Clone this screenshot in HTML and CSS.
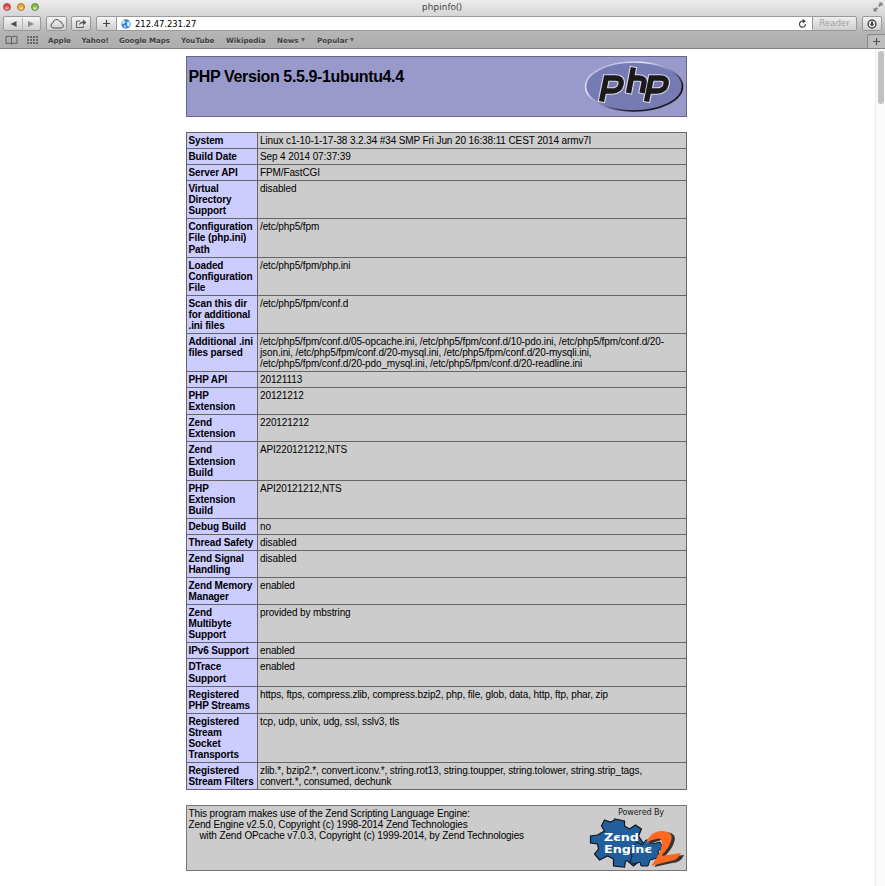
FILE: index.html
```
<!DOCTYPE html>
<html lang="en">
<head>
<meta charset="utf-8">
<title>phpinfo()</title>
<link rel="stylesheet" href="styles.css">
</head>
<body>
<header class="chrome">
  <div class="titlebar">
    <div class="lights"><i class="red"></i><i class="amber"></i><i class="green"></i></div>
    <span class="title">phpinfo()</span>
    <svg class="full" width="10" height="10" viewBox="0 0 10 10"><path d="M5.500.5h4v4L8.300 3.300 6.500 5 5 3.500 6.700 1.700zM4.500 9.500h-4v-4l1.200 1.200L3.500 5 5 6.500 3.300 8.300z" fill="#828282"/></svg>
  </div>
  <div class="toolbar">
    <div class="btn nav"><svg width="36" height="14" viewBox="0 0 36 14"><path d="M12.500 4v6L6.500 7z" fill="#505050"/><path d="M24 4v6L30 7z" fill="#8c8c8c"/><path d="M18.500 1v12" stroke="#b5b5b5"/></svg></div>
    <div class="btn cloud"><svg width="16" height="12" viewBox="0 0 16 12"><path d="M4 10h8.200a2.300 2.300 0 0 0 .5-4.500 2.200 2.200 0 0 0-2-2.200A3.600 3.600 0 0 0 4 4.800 2.700 2.700 0 0 0 4 10z" fill="none" stroke="#505050"/></svg></div>
    <div class="btn share"><svg width="14" height="12" viewBox="0 0 14 12"><path d="M6 3H2.500v6.500h7V8" fill="none" stroke="#606060"/><path d="M5 7.500C5.200 4.800 6.500 3.500 9 3.500V1.500L12.500 4.500 9 7.300V5.300C7 5.200 6 6 5 7.500z" fill="#555"/></svg></div>
    <div class="btn plus"><svg width="9" height="9" viewBox="0 0 9 9"><path d="M4.500 1v7M1 4.500h7" stroke="#444" stroke-width="1.200"/></svg></div>
    <div class="address">
      <svg width="10" height="10" viewBox="0 0 10 10"><circle cx="5" cy="5" r="4.700" fill="#3c83ce"/><path d="M2 1.500Q4 1 4.500 2.500L3.500 4.500 1 5Q.8 3 2 1.500zM6 3l2.500-.8Q9.500 4 9 6L7.500 8 6 6.500zM3 6l2 1-.7 2Q2.700 8.500 3 6z" fill="#c9e7ff"/></svg>
      <span>212.47.231.27</span>
      <svg class="reload" width="9" height="10" viewBox="0 0 9 10"><path d="M7.500 5.200A3 3 0 1 1 5 2.200" fill="none" stroke="#444" stroke-width="1.200"/><path d="M4.500 0 8 2 5 4.500z" fill="#444"/></svg>
    </div>
    <div class="reader">Reader</div>
    <div class="btn down"><svg width="10" height="10" viewBox="0 0 10 10"><circle cx="5" cy="5" r="3.900" fill="#eee" stroke="#505050" stroke-width="1.500"/><path d="M4 2.500h2v2.200h1.500L5 7.500 2.500 4.700H4z" fill="#444"/></svg></div>
  </div>
  <div class="bookmarks">
    <svg class="book" width="13" height="10" viewBox="0 0 13 10"><path d="M6.500 2Q4 .500 1 1.500V8.500Q4 7.500 6.500 9 9 7.500 12 8.500V1.500Q9 .500 6.500 2zV9" fill="none" stroke="#555" stroke-width=".9"/></svg>
    <svg class="dots" width="11" height="9" viewBox="0 0 11 9"><path d="M0 1h11M0 4h11M0 7h11" stroke="#505050" stroke-width="1.500" stroke-dasharray="2 1"/></svg>
    <span class="bm apple">Apple</span><span class="bm yahoo">Yahoo!</span><span class="bm maps">Google Maps</span><span class="bm tube">YouTube</span><span class="bm wiki">Wikipedia</span><span class="bm news">News</span><i class="tri"></i><span class="bm pop">Popular</span><i class="tri"></i>
    <div class="newtab"><svg width="7" height="7" viewBox="0 0 7 7"><path d="M3.500 0v7M0 3.500h7" stroke="#555" stroke-width="1.200"/></svg></div>
  </div>
</header>
<div class="view">
<main class="page">
  <section class="banner">
    <h1>PHP Version 5.5.9-1ubuntu4.4</h1>
    <svg width="102" height="54" viewBox="0 0 102 54">
      <defs><linearGradient id="rim" x1="0" y1="0" x2="1" y2="1"><stop offset="0" stop-color="#9a9acc"/><stop offset=".3" stop-color="#e4e4f4"/><stop offset=".55" stop-color="#7377ad"/><stop offset=".75" stop-color="#111"/><stop offset="1" stop-color="#333"/></linearGradient></defs>
      <ellipse cx="50" cy="26.500" rx="48.500" ry="24.500" fill="#777bb4" stroke="url(#rim)" stroke-width="1.600"/>
      <g fill="none">
        <g stroke="#d8d8ec" stroke-width="7.600">
          <path d="M17.300 42.500 22.300 18H31Q38.500 18 37 24.500 35.500 31 28 31H21.500"/>
          <path d="M44.300 34 49.600 6.500M47.500 18H54.500Q61 18 60 23L57.800 34"/>
          <path d="M62.300 42.500 67.300 18H76Q83.500 18 82 24.500 80.500 31 73 31H66.500"/>
        </g>
        <g stroke="#1b1919" stroke-width="5.300">
          <path d="M17.500 41.500 22.300 18H31Q38.500 18 37 24.500 35.500 31 28 31H21.500"/>
          <path d="M44.500 33 49.400 7.500M47.500 18H54.500Q61 18 60 23L58 33"/>
          <path d="M62.500 41.500 67.300 18H76Q83.500 18 82 24.500 80.500 31 73 31H66.500"/>
        </g>
      </g>
    </svg>
  </section>
  <dl class="info">
    <dt>System</dt><dd>Linux c1-10-1-17-38 3.2.34 #34 SMP Fri Jun 20 16:38:11 CEST 2014 armv7l</dd>
    <dt>Build Date</dt><dd>Sep 4 2014 07:37:39</dd>
    <dt>Server API</dt><dd>FPM/FastCGI</dd>
    <dt>Virtual<br>Directory<br>Support</dt><dd>disabled</dd>
    <dt>Configuration<br>File (php.ini)<br>Path</dt><dd>/etc/php5/fpm</dd>
    <dt>Loaded<br>Configuration<br>File</dt><dd>/etc/php5/fpm/php.ini</dd>
    <dt>Scan this dir<br>for additional<br>.ini files</dt><dd>/etc/php5/fpm/conf.d</dd>
    <dt>Additional .ini<br>files parsed</dt><dd>/etc/php5/fpm/conf.d/05-opcache.ini, /etc/php5/fpm/conf.d/10-pdo.ini, /etc/php5/fpm/conf.d/20-<br>json.ini, /etc/php5/fpm/conf.d/20-mysql.ini, /etc/php5/fpm/conf.d/20-mysqli.ini,<br>/etc/php5/fpm/conf.d/20-pdo_mysql.ini, /etc/php5/fpm/conf.d/20-readline.ini</dd>
    <dt>PHP API</dt><dd>20121113</dd>
    <dt>PHP<br>Extension</dt><dd>20121212</dd>
    <dt>Zend<br>Extension</dt><dd>220121212</dd>
    <dt>Zend<br>Extension<br>Build</dt><dd>API220121212,NTS</dd>
    <dt>PHP<br>Extension<br>Build</dt><dd>API20121212,NTS</dd>
    <dt>Debug Build</dt><dd>no</dd>
    <dt>Thread Safety</dt><dd>disabled</dd>
    <dt>Zend Signal<br>Handling</dt><dd>disabled</dd>
    <dt>Zend Memory<br>Manager</dt><dd>enabled</dd>
    <dt>Zend<br>Multibyte<br>Support</dt><dd>provided by mbstring</dd>
    <dt>IPv6 Support</dt><dd>enabled</dd>
    <dt>DTrace<br>Support</dt><dd>enabled</dd>
    <dt>Registered<br>PHP Streams</dt><dd>https, ftps, compress.zlib, compress.bzip2, php, file, glob, data, http, ftp, phar, zip</dd>
    <dt>Registered<br>Stream<br>Socket<br>Transports</dt><dd>tcp, udp, unix, udg, ssl, sslv3, tls</dd>
    <dt>Registered<br>Stream Filters</dt><dd>zlib.*, bzip2.*, convert.iconv.*, string.rot13, string.toupper, string.tolower, string.strip_tags,<br>convert.*, consumed, dechunk</dd>
  </dl>
  <section class="zend">
    <p>This program makes use of the Zend Scripting Language Engine:<br>Zend Engine v2.5.0, Copyright (c) 1998-2014 Zend Technologies<br><span class="indent">with Zend OPcache v7.0.3, Copyright (c) 1999-2014, by Zend Technologies</span></p>
    <svg width="100" height="64" viewBox="0 0 100 64">
      <text class="powered" x="32" y="9" textLength="46" lengthAdjust="spacingAndGlyphs">Powered By</text>
      <path transform="translate(1.500 -5)" d="M17 19 23 21 27 19 27 18 37 20V25L42 28 48 24 54 28 51 35 55 41 60 44V51L53 51 49 55 52 60 46 65 40 60 38 60 37 66 26 65 26 58 20 55 12 59 7 53 11 48 10 43 3 42V35L10 34 17 30 14 25Z" fill="#215f9c" stroke="#10151c" stroke-width="1.200"/>
      <path transform="translate(-5 1)" d="M53 38 56 35 61 38 65 33H70L72 37 79 35 82 41 77 44 78 50 73 52 69 53 67 59H60L59 55 53 57 49 54 51 49 49 45Z" fill="#215f9c" stroke="#10151c"/>
      <path d="M61 38Q66 24 79 25 90 26 87 35 85 42 77 50L97 48Q93 56 85 56L67 60Q78 46 78 37 78 31 71 34 65 36 61 38Z" transform="translate(1.200 1)" fill="#39332f"/>
      <path d="M60 37Q65 24 77 25 88 26 85 35 83 42 75 50L95 47Q92 54 84 55L65 60Q76 46 76 37 76 31 70 33 64 34 60 37Z" fill="#ff6820"/>
      <g class="engine"><text x="18" y="34.500" textLength="35" lengthAdjust="spacingAndGlyphs">Zєnd</text><text x="18" y="47" textLength="48" lengthAdjust="spacingAndGlyphs">Enginє</text></g>
    </svg>
  </section>
</main>
<div class="scroll"><i></i></div>
</div>
</body>
</html>
```
FILE: styles.css
```
* { box-sizing: border-box; }
body { margin: 0; width: 885px; height: 886px; overflow: hidden; background: #fff; color: #000; font-family: "Liberation Sans", Arial, sans-serif; }
svg { display: block; flex: none; }
i { display: block; flex: none; }
.chrome { height: 49px; background: linear-gradient(#ececec, #d5d5d5 16px, #b5b5b5 32px, #adadad 48px); border-bottom: 1px solid #828282; font-family: "Open Sans", sans-serif; }
.titlebar { height: 15px; display: grid; grid-template-columns: 100px 1fr 100px; align-items: center; padding: 0 2px 2px 3px; }
.lights { display: flex; gap: 6px; }
.lights i { width: 8px; height: 8px; border-radius: 50%; border: 1px solid; }
.red { background: radial-gradient(circle at 50% 80%, #ffb5a8, #e8443d 60%); border-color: #a84642 !important; }
.amber { background: radial-gradient(circle at 50% 80%, #ffe69a, #efa02d 60%); border-color: #a97833 !important; }
.green { background: radial-gradient(circle at 50% 80%, #d9f5aa, #7db845 60%); border-color: #628c42 !important; }
.title { text-align: center; font-size: 9px; line-height: 13px; color: #333; letter-spacing: .2px; padding-right: 2px; }
.full { justify-self: end; }
.toolbar { height: 17px; display: flex; align-items: flex-start; padding: 1px 3px 0; }
.btn { height: 15px; border: 1px solid #989898; border-radius: 2px; background: linear-gradient(#f5f5f5, #cecece); display: flex; align-items: center; justify-content: center; }
.nav { width: 38px; margin-right: 5px; }
.cloud { width: 21px; margin-right: 4px; }
.share { width: 20px; margin-right: 5px; }
.plus { width: 21px; border-radius: 2px 0 0 2px; }
.address { flex: 1; height: 15px; background: #fff; border: solid #9b9b9b; border-width: 1px 0; display: flex; align-items: center; padding: 0 5px 0 4px; gap: 4px; font: 8.400px "DejaVu Sans", sans-serif; }
.reload { margin-left: auto; }
.reader { width: 45px; height: 15px; border: 1px solid #989898; border-radius: 0 2px 2px 0; background: linear-gradient(#eee, #cfcfcf); color: #a2a2a2; font: 8.600px/13px "DejaVu Sans", sans-serif; text-align: center; margin-right: 5px; }
.down { width: 20px; }
.bookmarks { height: 16px; display: flex; align-items: center; padding-left: 5px; font: bold 7.100px/16px "DejaVu Sans", sans-serif; color: #3e3e3e; text-shadow: 0 1px #c8c8c8; }
.book { margin-right: 9px; }
.dots { margin-right: 10px; }
.bm { flex: none; white-space: nowrap; padding-top: 1px; }
.apple { width: 33.500px; }
.yahoo { width: 37.500px; }
.maps { width: 62px; letter-spacing: -.05px; }
.tube { width: 45px; }
.wiki { width: 51px; }
.news { width: 24px; }
.pop { width: 33px; }
.tri { border: solid transparent; border-width: 4px 2.500px 0; border-top-color: #606060; margin-right: 12px; }
.newtab { margin-left: auto; align-self: flex-end; width: 18px; height: 14px; border: solid #888; border-width: 1px 0 0 1px; border-radius: 3px 0 0 0; background: #bdbdbd; display: flex; align-items: center; justify-content: center; }
.view { height: 837px; display: flex; justify-content: space-between; }
.page { width: 501px; margin-left: 186px; padding-top: 7px; }
.banner { height: 61px; background: #9999cc; border: 1px solid #666686; display: flex; justify-content: space-between; padding: 3px 0 0 1.500px; }
h1 { margin: 7px 0 0; font-size: 16px; letter-spacing: -.37px; line-height: 20px; white-space: nowrap; }
.info { margin: 15px 0 0; border: solid #666; border-width: 1px 1px 0; display: grid; grid-template-columns: 71px 1fr; font-size: 10px; letter-spacing: -.115px; line-height: 11.060px; }
dt, dd { margin: 0; padding: 2px 0 2px 1.500px; border-bottom: 1px solid #666; white-space: nowrap; }
dt { background: #ccccff; font-weight: bold; border-right: 1px solid #666; }
dd { background: #ccc; padding-left: 2px; }
.zend { margin-top: 15px; height: 66px; border: 1px solid #777; background: #ccc; display: flex; justify-content: space-between; font-size: 10px; letter-spacing: -.125px; line-height: 11px; }
.zend p { margin: 2px 0 0 1.500px; white-space: nowrap; }
.indent { padding-left: 11px; }
.powered { font: 8px "DejaVu Sans", sans-serif; fill: #222; }
.engine { font: bold 11px "DejaVu Sans", sans-serif; letter-spacing: 0; fill: #fff; }
.scroll { width: 10px; background: #fafafa; border-left: 1px solid #ececec; padding: 2px 2px 0; }
.scroll i { width: 6px; height: 53px; border-radius: 3px; background: #c1c1c1; }
```
